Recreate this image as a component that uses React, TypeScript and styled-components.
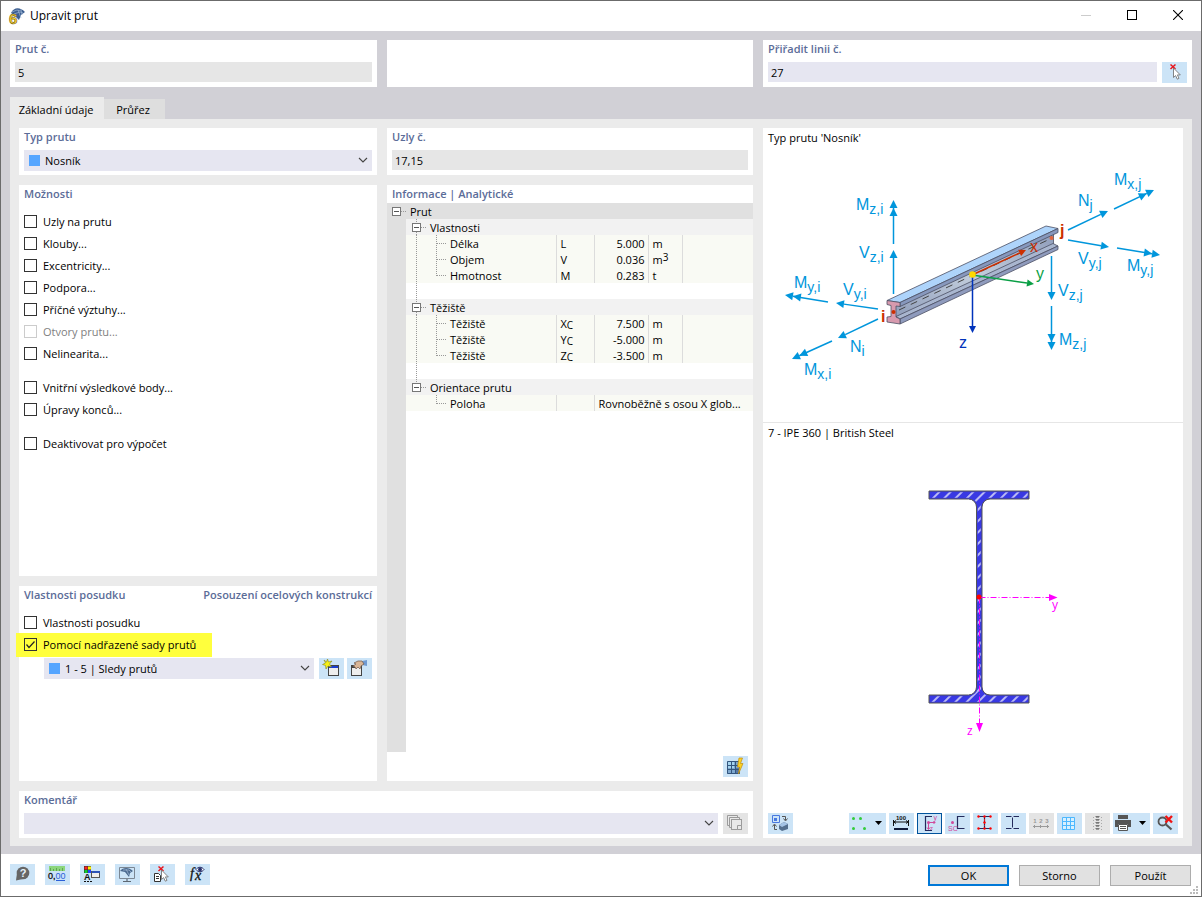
import React from "react";
import styled, { createGlobalStyle } from "styled-components";

const GlobalStyle = createGlobalStyle`
  *, *::before, *::after { box-sizing: border-box; }
  html, body { margin: 0; padding: 0; }
  body, button, input, select, table {
    font-family: "Open Sans", "Noto Sans", sans-serif;
    font-size: 11px;
    color: #000;
  }
`;

/* ---------- window frame ---------- */

const Window = styled.div`
  display: flex;
  flex-direction: column;
  min-height: 100vh;
  background: #fff;
  border: 1px solid #6b6b6b;
`;

const TitleBar = styled.header`
  display: flex;
  align-items: center;
  height: 30px;
  padding-left: 7px;
  gap: 4px;
`;

const WindowTitle = styled.h1`
  flex: 1;
  margin: 0;
  font-size: 12px;
  line-height: 16px;
  font-weight: 400;
`;

const WindowControls = styled.div`
  display: flex;
`;

const WindowButton = styled.button`
  display: flex;
  align-items: center;
  justify-content: center;
  width: 46px;
  height: 30px;
  padding: 0 0 2px;
  border: 0;
  background: transparent;
`;

const Body = styled.main`
  flex: 1;
  display: flex;
  flex-direction: column;
  padding: 9px 9px 8px;
  background: #d1d0d6;
`;

const TopRow = styled.div`
  display: grid;
  grid-template-columns: minmax(0, 367fr) minmax(0, 366fr) minmax(0, 429fr);
  gap: 10px;
`;

const Tabs = styled.div`
  display: flex;
  align-items: flex-end;
  height: 22px;
  margin-top: 10px;
`;

const Tab = styled.button<{ $active?: boolean }>`
  height: ${(p) => (p.$active ? 22 : 20)}px;
  width: ${(p) => (p.$active ? 94 : 61)}px;
  padding: ${(p) => (p.$active ? "4px 2px 0 0" : "2px 3px 0 0")};
  border: 0;
  background: ${(p) => (p.$active ? "#ebebeb" : "#dedede")};
  line-height: 16px;
  white-space: nowrap;
`;

const TabPage = styled.div`
  flex: 1;
  display: grid;
  grid-template-columns: minmax(0, 358fr) minmax(0, 366fr) minmax(0, 420fr);
  grid-template-rows: 47px minmax(391px, 1fr) 195px 47px;
  grid-template-areas:
    "type nodes view"
    "options info view"
    "design info view"
    "comment comment view";
  gap: 10px;
  padding: 9px 9px 8px;
  background: #ebebeb;
`;

const Footer = styled.footer`
  display: flex;
  align-items: flex-start;
  gap: 10px;
  height: 42px;
  padding: 10px 10px 0 9px;
  position: relative;
`;

const Spacer = styled.div`
  flex: 1;
`;

const DialogButton = styled.button<{ $primary?: boolean }>`
  width: 81px;
  height: 21px;
  padding: 0;
  margin-top: 1px;
  background: #e1e1e1;
  border: ${(p) => (p.$primary ? "2px solid #0078d7" : "1px solid #adadad")};
  line-height: 16px;
`;

const Grip = styled.svg`
  position: absolute;
  right: 3px;
  bottom: 2px;
`;

/* ---------- panels ---------- */

const Panel = styled.section<{ $area?: string }>`
  display: flex;
  flex-direction: column;
  min-height: 47px;
  padding: 0 5px 4px;
  background: #fff;
  ${(p) => p.$area && `grid-area: ${p.$area};`}
`;

const Heading = styled.h2`
  display: flex;
  justify-content: space-between;
  margin: 0;
  height: 22px;
  font-size: 11px;
  line-height: 18px;
  font-weight: 600;
  color: #5b6c98;
`;

const FieldRow = styled.div`
  display: flex;
  gap: 5px;
`;

const TextField = styled.input<{ $editable?: boolean }>`
  flex: 1;
  min-width: 0;
  height: 20px;
  padding: 0 3px;
  border: 0;
  background: ${(p) => (p.$editable ? "#e6e6f1" : "#e6e6e6")};
`;

const Combo = styled.div`
  position: relative;
  flex: 1;
  display: flex;
  align-items: center;
  height: 21px;
  padding-left: 5px;
  gap: 5px;
  background: #e6e6f1;
`;

const Swatch = styled.span`
  width: 11px;
  height: 11px;
  background: #55a5ff;
`;

const ComboSelect = styled.select`
  flex: 1;
  min-width: 0;
  height: 20px;
  padding: 0 20px 0 0;
  border: 0;
  background: transparent;
  appearance: none;
`;

const Chevron = styled.svg`
  position: absolute;
  right: 4px;
  top: 7px;
  pointer-events: none;
`;

const IconButton = styled.button<{ $wide?: boolean; $off?: boolean; $on?: boolean }>`
  display: block;
  flex: none;
  width: ${(p) => (p.$wide ? 37 : 25)}px;
  height: 21px;
  padding: 0;
  border: 0;
  background: ${(p) => (p.$off ? "#e4e4e4" : "#cce4f7")};
  ${(p) => p.$on && "box-shadow: inset 0 0 0 1px #00539c;"}
  svg { display: block; }
`;

const CheckList = styled.div`
  display: flex;
  flex-direction: column;
  gap: 12px;
  padding-top: 4px;
`;

const CheckGroup = styled.div`
  display: flex;
  flex-direction: column;
`;

const CheckLabel = styled.label<{ $off?: boolean }>`
  display: flex;
  align-items: center;
  gap: 6px;
  height: 22px;
  line-height: 16px;
  color: ${(p) => (p.$off ? "#808080" : "#000")};
`;

const Highlight = styled.div`
  align-self: flex-start;
  width: 196px;
  margin: -1px 0 -1px -8px;
  padding: 1px 0 1px 8px;
  background: #ffff3d;
`;

const CheckInput = styled.input`
  appearance: none;
  flex: none;
  width: 13px;
  height: 13px;
  margin: 0;
  border: 1px solid #333;
  &:disabled { border-color: #ccc; }
`;

const CheckMark = styled.span`
  display: flex;
  position: relative;
  margin-bottom: 1px;
  svg { position: absolute; left: 0; top: 0; pointer-events: none; }
`;

const AssignedSet = styled.div`
  display: flex;
  margin: 2px 0 0 20px;
  gap: 5px;
`;

const ButtonPair = styled.div`
  display: flex;
  gap: 3px;
`;

/* ---------- information table ---------- */

const InfoPanel = styled(Panel)`
  padding: 0 0 4px;
`;

const InfoHeading = styled(Heading)`
  height: 18px;
  padding-left: 5px;
`;

const InfoArea = styled.div`
  flex: 1;
  background: linear-gradient(to right, #e0e0e0 19px, transparent 19px);
`;

const InfoFooter = styled.div`
  display: flex;
  justify-content: flex-end;
  padding: 4px 5px 0;
`;

const Table = styled.table`
  width: 100%;
  border-collapse: collapse;
  table-layout: fixed;
`;

const Row = styled.tr<{ $kind: "root" | "section" | "data" | "blank" }>`
  height: 16px;
  background: ${(p) =>
    ({ root: "#e0e0e0", section: "#f2f2f2", data: "#f9faf4", blank: "#fff" })[p.$kind]};
`;

const Strip = styled.td`
  padding: 0;
  background: #e0e0e0;
`;

const NameCell = styled.th`
  padding: 0;
  text-align: left;
  font-weight: 400;
`;

const NameLine = styled.div<{ $inset?: number }>`
  display: flex;
  height: 16px;
  line-height: 18px;
  padding-left: ${(p) => p.$inset ?? 0}px;
  svg { display: block; flex: none; }
`;

const Cell = styled.td<{ $right?: boolean }>`
  padding: 2px ${(p) => (p.$right ? 3 : 0)}px 0 4px;
  height: 16px;
  line-height: 14px;
  border-left: 1px solid #dcdcdc;
  text-align: ${(p) => (p.$right ? "right" : "left")};
  white-space: nowrap;
  sub, sup { font-size: 10px; line-height: 0; }
  sub { vertical-align: -1px; }
  sup { vertical-align: 3px; }
`;

const PlainCell = styled.td`
  padding: 0;
`;

const Toggle = styled.button`
  width: 9px;
  height: 16px;
  padding: 0;
  border: 0;
  background: transparent;
`;

/* ---------- graphics ---------- */

const ViewPanel = styled(Panel)`
  padding: 0 0 4px;
`;

const ViewTitle = styled.p`
  margin: 0;
  padding: 2px 5px 0;
  height: 20px;
  line-height: 16px;
`;

const MemberView = styled.div`
  height: 295px;
  border-bottom: 1px solid #e6e6e6;
`;

const SectionView = styled.div`
  flex: 1;
  min-height: 390px;
`;

const Drawing = styled.svg<{ $height: number }>`
  display: block;
  width: 100%;
  height: ${(p) => p.$height}px;
`;

const MemberSvg = styled(Drawing)`
  font-family: "Liberation Sans", Arial, sans-serif;
`;

const Toolbar = styled.div`
  display: flex;
  gap: 3px;
  padding: 0 5px;
`;

const BLUE = "#0096dc";
const NAVY = "#232a5c";

type ArrowProps = {
  from: [number, number];
  to: [number, number];
  color?: string;
  double?: boolean;
  size?: number;
};

function Arrow({ from, to, color = BLUE, double, size = 8 }: ArrowProps) {
  const dx = to[0] - from[0];
  const dy = to[1] - from[1];
  const len = Math.hypot(dx, dy);
  const ux = dx / len;
  const uy = dy / len;
  const half = size / 2;
  const head = (back: number) => {
    const tx = to[0] - ux * back;
    const ty = to[1] - uy * back;
    const bx = tx - ux * size;
    const by = ty - uy * size;
    return `${tx},${ty} ${bx - uy * half},${by + ux * half} ${bx + uy * half},${by - ux * half}`;
  };
  return (
    <g fill={color} stroke="none">
      <line
        x1={from[0]}
        y1={from[1]}
        x2={to[0] - ux * size}
        y2={to[1] - uy * size}
        stroke={color}
        strokeWidth="1.5"
      />
      <polygon points={head(0)} />
      {double && <polygon points={head(8)} />}
    </g>
  );
}

function Force({ x, y, name, sub }: { x: number; y: number; name: string; sub: string }) {
  return (
    <text x={x} y={y} fontSize="16" fill={BLUE}>
      {name}
      <tspan dy="4" fontSize="14">
        {sub}
      </tspan>
    </text>
  );
}

function MemberDrawing() {
  return (
    <MemberSvg $height={272} viewBox="763 148 420 272" role="img" aria-label="Nosník">
      <defs>
        <linearGradient id="web" x1="0" x2="1" y1="1" y2="0">
          <stop offset="0" stopColor="#8f9dba" />
          <stop offset="0.5" stopColor="#c3cedd" />
          <stop offset="1" stopColor="#8e9cba" />
        </linearGradient>
      </defs>
      <g stroke="#4b4f63" strokeWidth="0.8" strokeLinejoin="round">
        <polygon points="895,306 1053.500,232 1053.500,245 895,318" fill="url(#web)" />
        <polygon points="896,316.500 1053,243.500 1058,246 900,319" fill="#a9b6cf" />
        <polygon points="900,319 1058,246 1058,249.500 900,324" fill="#8f9bbd" />
        <polygon points="887,300.500 1046,226 1058,228.500 900,302.500" fill="#aed4fb" />
        <polygon points="900,302.500 1058,228.500 1058,232.500 900,306.500" fill="#8798bd" />
        <polygon
          points="887,300.500 900,302.500 900,306.500 896,306 896,317 900,319 900,324 887,322 887,317 891,316.500 891,305.500 887,304.500"
          fill="#d79aae"
        />
      </g>
      <line x1="899" y1="310" x2="1050" y2="239" stroke="#444" strokeDasharray="7 6" />
      <circle cx="893.500" cy="312" r="2" fill="#cc2f00" />
      <circle cx="1051.500" cy="238" r="2" fill="#e0663f" />

      <Arrow from={[972, 275]} to={[1026, 250]} color="#cc2f00" size={7} />
      <Arrow from={[972, 275]} to={[1034, 284]} color="#0a9f45" size={7} />
      <Arrow from={[972.5, 275]} to={[972.5, 333]} color="#0033bb" size={7} />
      <circle cx="972.500" cy="274.500" r="3.300" fill="#ffd800" />
      <text x="1030" y="252" fontSize="16" fill="#cc2f00">x</text>
      <text x="1036" y="279" fontSize="16" fill="#0a9f45">y</text>
      <text x="959" y="348" fontSize="16" fill="#0033bb">z</text>
      <text x="881" y="322" fontSize="16" fontWeight="700" fill="#cc2f00">i</text>
      <text x="1060" y="236" fontSize="16" fontWeight="700" fill="#cc2f00">j</text>

      <Arrow from={[893.5, 244]} to={[893.5, 200]} double />
      <Arrow from={[893.5, 294]} to={[893.5, 250]} />
      <Arrow from={[828, 302]} to={[785, 295]} double />
      <Arrow from={[878, 309]} to={[836, 303]} />
      <Arrow from={[878, 319]} to={[838, 338]} />
      <Arrow from={[832, 341]} to={[792, 359]} double />
      <Arrow from={[1068, 230]} to={[1108, 211]} />
      <Arrow from={[1114, 209]} to={[1154, 190]} double />
      <Arrow from={[1068, 240]} to={[1109, 247]} />
      <Arrow from={[1117, 248]} to={[1160, 255]} double />
      <Arrow from={[1051.5, 256]} to={[1051.5, 300]} />
      <Arrow from={[1051.5, 306]} to={[1051.5, 350]} double />

      <Force x={856} y={210} name="M" sub="z,i" />
      <Force x={859} y={258} name="V" sub="z,i" />
      <Force x={794} y={288} name="M" sub="y,i" />
      <Force x={843} y={295} name="V" sub="y,i" />
      <Force x={850} y={352} name="N" sub="i" />
      <Force x={804} y={375} name="M" sub="x,i" />
      <Force x={1114} y={185} name="M" sub="x,j" />
      <Force x={1078} y={206} name="N" sub="j" />
      <Force x={1078} y={264} name="V" sub="y,j" />
      <Force x={1127} y={271} name="M" sub="y,j" />
      <Force x={1058} y={296} name="V" sub="z,j" />
      <Force x={1059} y={345} name="M" sub="z,j" />
    </MemberSvg>
  );
}

function SectionDrawing() {
  const outline =
    "M929 491H1029V499H990A8 8 0 0 0 982 507V687A8 8 0 0 0 990 695H1029V703H929V695H968.500A8 8 0 0 0 976.500 687V507A8 8 0 0 0 968.500 499H929Z";
  return (
    <Drawing $height={358} viewBox="763 443 420 358" role="img" aria-label="IPE 360">
      <defs>
        <pattern id="hatch" width="8" height="8" patternUnits="userSpaceOnUse" patternTransform="rotate(45)">
          <line x1="4" y1="0" x2="4" y2="8" stroke="#fff" strokeWidth="1.300" />
        </pattern>
        <clipPath id="profile">
          <path d={outline} />
        </clipPath>
      </defs>
      <path d={outline} fill="#3939e3" />
      <path d={outline} fill="url(#hatch)" stroke="#3939e3" strokeWidth="2.500" clipPath="url(#profile)" />
      <path d={outline} fill="none" stroke="#555" />
      <path
        d="M979.500 597.500H1050M979.500 597.500V724"
        stroke="#f0f"
        fill="none"
        strokeDasharray="6 2 1 2"
      />
      <g fill="#f0f">
        <path d="M1049 594V601L1057.500 597.500ZM976 723H983L979.500 732Z" />
        <text x="1052" y="609" fontSize="12">y</text>
        <text x="967" y="735" fontSize="12">z</text>
      </g>
      <circle cx="979" cy="597" r="2.500" fill="#f00" />
    </Drawing>
  );
}

/* ---------- icons ---------- */

const IconSvg = styled.svg`
  font-family: "Liberation Sans", Arial, sans-serif;
`;

const SerifText = styled.text`
  font-family: "Liberation Serif", serif;
  font-style: italic;
`;

function Icon({ width = 25, children }: { width?: number; children: React.ReactNode }) {
  return (
    <IconSvg width={width} height="21" viewBox={`0 0 ${width} 21`} fill="none" aria-hidden="true">
      {children}
    </IconSvg>
  );
}

const cursorPath = "M11.500 6V15.500L13.600 13.600L15.300 17.200L17 16.400L15.400 12.900H18.300Z";

const AppIcon = () => (
  <IconSvg width="18" height="18" viewBox="0 0 18 18" aria-hidden="true">
    <path d="M3 6C6 0 12 0 17 5L13 8L11 13L6 8Z" fill="#3d5f91" />
    <path d="M4 5L9 3L13 4M6 7L12 5L15 6M10 3L13 11M13 2L14 8" stroke="#9db6d6" strokeWidth="0.7" fill="none" />
    <text x="1" y="16.500" fontSize="15" fontWeight="700" fill="#ffd42a" stroke="#6b5b1a" strokeWidth="0.6">
      6
    </text>
  </IconSvg>
);

const PickIcon = () => (
  <Icon>
    <path d="M8.500 2.500L13.500 7M13.500 2.500L8.500 7" stroke="#e8141c" strokeWidth="1.500" />
    <path d={cursorPath} fill="#fff" stroke="#777" strokeWidth="0.900" />
  </Icon>
);

const NewSetIcon = () => (
  <Icon>
    <rect x="9.500" y="7.500" width="10" height="10" fill="#eee" stroke="#444" />
    <rect x="10" y="8" width="9" height="2" fill="#1b3fd0" />
    <path d="M8.500 1L9.500 4L13 3L10.500 6L12.500 9L9 8L7 11L6.500 7.500L3.500 6.500L6.500 5L5 2L7.500 4Z" fill="#f7f016" stroke="#84851f" strokeWidth="0.6" />
  </Icon>
);

const EditSetIcon = () => (
  <Icon>
    <rect x="4.500" y="7.500" width="10" height="10" fill="#eee" stroke="#444" />
    <rect x="4" y="7" width="5" height="3" fill="#444" />
    <path d="M15 3L20 2V8L15 7Z" fill="#6f9ad2" />
    <path d="M7 5L11 3H15L17 6L14 8L13 11L11 9L9 11L8 9L6 8L9 6Z" fill="#d9b596" stroke="#6f5849" strokeWidth="0.7" />
  </Icon>
);

const GridBoltIcon = () => (
  <Icon>
    <rect x="4" y="5" width="13" height="13" fill="#7ea8cf" />
    <rect x="4" y="5" width="7" height="7" fill="#a5d4ee" />
    <rect x="12" y="12" width="5" height="6" fill="#5577a6" />
    <path d="M4.500 5.500H16.500V17.500H4.500ZM8.500 5V18M12.500 5V18M4 9.500H17M4 13.500H17" stroke="#34567f" />
    <path d="M16 2H19.500L17.500 7.500H20L15.500 18L16.500 11H14.500Z" fill="#fcd226" stroke="#c08d10" strokeWidth="0.7" />
  </Icon>
);

const CopiesIcon = () => (
  <Icon>
    <g stroke="#9b9b9b" fill="#e9e9e9">
      <path d="M4.500 12.500V2.500H14.500V4M4.500 12.500H6M6.500 14.500V4.500H16.500V6M6.500 14.500H8" />
      <rect x="8.500" y="6.500" width="10" height="10" />
      <path d="M14.500 16.500V12.500H18.500" />
    </g>
  </Icon>
);

const RenderIcon = () => (
  <Icon>
    <path d="M4.500 2.500H11.500V9.500H4.500Z" stroke="#4878e0" />
    <rect x="6" y="5" width="3" height="3" fill="#4878e0" />
    <path d="M14 3.500H17.500V7M15.500 5.500L17.500 8L19.500 5.500" stroke="#555" />
    <path d="M6.500 12V16.500H9M4.500 13.500L6.500 11L8.500 13.500" stroke="#555" />
    <path d="M11 12L16 9L20 11V16L14 18L11 16Z" fill="#54708f" />
    <path d="M11 12L16 9L20 11L14 14Z" fill="#a4c4e6" />
  </Icon>
);

const DropArrow = () => <path d="M26 8H33L29.500 12Z" fill="#000" />;

const PointsIcon = () => (
  <Icon width={37}>
    <g fill="#33cc3b">
      <circle cx="4.500" cy="5.500" r="1.500" />
      <circle cx="11.500" cy="5.500" r="1.500" />
      <circle cx="4.500" cy="15.500" r="1.500" />
      <circle cx="15.500" cy="15.500" r="1.500" />
    </g>
    <DropArrow />
  </Icon>
);

const DimensionIcon = () => (
  <Icon>
    <text x="12" y="6.500" fontSize="6" fontWeight="700" textAnchor="middle" fill="#111">100</text>
    <path d="M4.500 7V13M19.500 7V13M5 9H19M7 7.500L5 9L7 10.500M17 7.500L19 9L17 10.500" stroke="#111" />
    <rect x="5" y="15" width="14" height="2" fill="#111b3a" />
  </Icon>
);

const AxesIcon = () => (
  <Icon>
    <path d="M15 3.500H8.500V17.500H15" stroke={NAVY} strokeWidth="1.200" />
    <path d="M11.500 9.500H18M11.500 9.500V16M10 14.500L11.500 16.500L13 14.500M16.500 8L18 9.500L16.500 11" stroke="#d04a9b" />
    <circle cx="11.500" cy="9.500" r="1.500" fill="#d04a9b" />
    <text x="16.500" y="7" fontSize="7" fill="#d04a9b">y</text>
    <text x="13" y="17" fontSize="6" fill="#d04a9b">z</text>
  </Icon>
);

const ShearIcon = () => (
  <Icon>
    <path d="M19.500 3.500H12.500V15.500H19.500" stroke={NAVY} strokeWidth="1.200" />
    <circle cx="7.500" cy="9.500" r="1.500" fill="#d04a9b" />
    <text x="3" y="18" fontSize="7" fill="#d04a9b">SC</text>
  </Icon>
);

const StressIcon = () => (
  <Icon>
    <path d="M5 3.500H18M5 15.500H18M11.500 4V15" stroke={NAVY} strokeWidth="1.200" />
    <path d="M11.500 6V13" stroke="#e11" strokeDasharray="2 1" />
    <g fill="#f00">
      {[5.5, 11.5, 17.5].map((x) => (
        <React.Fragment key={x}>
          <circle cx={x} cy="3.500" r="1.200" />
          <circle cx={x} cy="15.500" r="1.200" />
        </React.Fragment>
      ))}
      <circle cx="11.500" cy="9.500" r="1.200" />
    </g>
  </Icon>
);

const PartsIcon = () => (
  <Icon>
    <path d="M5 3.500H10.500M12.500 3.500H18M5 15.500H10.500M12.500 15.500H18M11.500 4.500V14.500" stroke={NAVY} />
  </Icon>
);

const NumbersIcon = () => (
  <Icon>
    <g fontSize="6" fontWeight="700" textAnchor="middle" fill="#999">
      <text x="6" y="10">1</text>
      <text x="12" y="10">2</text>
      <text x="18" y="10">3</text>
    </g>
    <path d="M4 13.500H20M5.500 12V15M11.500 12V15M18.500 12V15" stroke="#999" />
  </Icon>
);

const GridIcon = () => (
  <Icon>
    <path d="M5.500 4.500H17.500V16.500H5.500ZM9.500 4V17M13.500 4V17M5 8.500H18M5 12.500H18" fill="#d8f0ff" stroke="#4db8ff" />
  </Icon>
);

const LegendIcon = () => (
  <Icon>
    <path d="M12.500 3V18" stroke="#777" strokeWidth="4" strokeDasharray="1 2" />
    <path d="M12.500 4V17" stroke="#999" strokeWidth="3" strokeDasharray="1 2" />
    <path d="M8.500 4V17M16.500 4V17" stroke="#aaa" strokeDasharray="1 2" />
  </Icon>
);

const PrinterIcon = () => (
  <Icon width={37}>
    <rect x="5" y="2" width="10" height="4" fill="#555" />
    <path d="M2 7H18V14H15V11H5V14H2Z" fill="#555" />
    <path d="M5.500 11.500H14.500V17.500H5.500ZM7 13.500H13M7 15.500H13" fill="#fff" stroke="#555" />
    <DropArrow />
  </Icon>
);

const ZoomOffIcon = () => (
  <Icon>
    <circle cx="9.500" cy="8.500" r="4" stroke="#555" strokeWidth="1.800" />
    <path d="M13 11.500L18.500 16.500" stroke="#555" strokeWidth="2.200" />
    <path d="M12.500 3L19 9.500M19 3L12.500 9.500" stroke="#f01414" strokeWidth="2.400" />
  </Icon>
);

const HelpIcon = () => (
  <Icon>
    <circle cx="13" cy="9" r="6.300" fill="#666" />
    <path d="M7 9L6 16.500L13 15Z" fill="#666" />
    <text x="13" y="13" fontSize="11" fontWeight="700" textAnchor="middle" fill="#e6f2fb">?</text>
  </Icon>
);

const UnitsIcon = () => (
  <Icon>
    <rect x="4" y="2" width="16" height="5" fill="#8cd67c" />
    <path d="M5.500 4V7M8.500 5V7M11.500 4V7M14.500 5V7M17.500 4V7" stroke="#5fa553" />
    <text x="3" y="15" fontSize="9" fill="#111" stroke="#111" strokeWidth="0.300">0,</text>
    <text x="10.500" y="15" fontSize="9" fill="#2a60d8">00</text>
    <path d="M11 16.500H20" stroke="#2a60d8" />
  </Icon>
);

const DisplayIcon = () => (
  <Icon>
    <rect x="4" y="2" width="7" height="7" fill="#333" />
    <rect x="4.500" y="2.500" width="3" height="3" fill="#f22" />
    <rect x="8" y="2.500" width="3" height="3" fill="#fe0" />
    <rect x="4.500" y="6" width="3" height="3" fill="#1c3" />
    <rect x="8" y="6" width="3" height="3" fill="#24f" />
    <text x="4" y="16" fontSize="9" fontWeight="700" fill="#111">A</text>
    <path d="M4 17.500H12" stroke="#111" strokeDasharray="2 1" />
    <rect x="11.500" y="7.500" width="8" height="6" fill="#eee" stroke="#555" />
    <rect x="12" y="7" width="8" height="2" fill="#2c54b8" />
  </Icon>
);

const MonitorIcon = () => (
  <Icon>
    <path d="M4.500 3.500H19.500V14.500H4.500Z" stroke="#7b8794" />
    <path d="M5 7C8 3 14 3 18 7L15 9L14 13L10 8Z" fill="#49698f" />
    <path d="M8 6L14 6L16 8M11 5L14 11" stroke="#b5cae2" strokeWidth="0.6" />
    <path d="M12 15V17M8 17.500H16" stroke="#5d6873" strokeWidth="1.200" />
  </Icon>
);

const PickListIcon = () => (
  <Icon>
    <path d="M8.500 2.500L13.500 7M13.500 2.500L8.500 7" stroke="#e8141c" strokeWidth="1.500" />
    <path d="M4.500 9.500H8.500L10.500 11.500V17.500H4.500ZM6 12.500H9M6 14.500H9" fill="#fff" stroke="#333" />
    <path d={cursorPath} fill="#fff" stroke="#777" strokeWidth="0.900" />
  </Icon>
);

const FormulaIcon = () => (
  <Icon>
    <SerifText x="5" y="14" fontSize="14" fill="#111" stroke="#111" strokeWidth="0.300">f</SerifText>
    <SerifText x="10" y="16" fontSize="14" fill="#111" stroke="#111" strokeWidth="0.300">x</SerifText>
    <path d="M11 5.500C13 2.500 17 2.500 19 5.500C17 8.500 13 8.500 11 5.500Z" fill="#fff" stroke="#27306b" />
    <circle cx="15" cy="5.500" r="2" fill="#27306b" />
  </Icon>
);

/* ---------- reusable controls ---------- */

function ComboBox({ label, value, swatch }: { label: string; value: string; swatch?: boolean }) {
  return (
    <Combo>
      {swatch && <Swatch />}
      <ComboSelect aria-label={label} defaultValue={value}>
        <option value={value}>{value}</option>
      </ComboSelect>
      <Chevron width="10" height="7" viewBox="0 0 10 7" fill="none">
        <path d="M1 1L5 5L9 1" stroke="#444" strokeWidth="1.100" />
      </Chevron>
    </Combo>
  );
}

function Check({ text, checked, off }: { text: string; checked?: boolean; off?: boolean }) {
  return (
    <CheckLabel $off={off}>
      <CheckMark>
        <CheckInput type="checkbox" defaultChecked={checked} disabled={off} />
        {checked && (
          <svg width="13" height="13" viewBox="0 0 13 13" fill="none">
            <path d="M2.500 6.500L5 9.500L10.500 3.500" stroke="#222" strokeWidth="1.200" />
          </svg>
        )}
      </CheckMark>
      {text}
    </CheckLabel>
  );
}

const DOTS = { stroke: "#999", strokeDasharray: "1 1" };

function ToggleBox({ name, above, below }: { name: string; above?: boolean; below?: boolean }) {
  return (
    <Toggle type="button" aria-label={`Sbalit ${name}`}>
      <svg width="9" height="16" viewBox="0 0 9 16" fill="none">
        {above && <path d="M4.500 0V4" {...DOTS} />}
        {below && <path d="M4.500 13V16" {...DOTS} />}
        <rect x="0.500" y="4.500" width="8" height="8" fill="#fff" stroke="#777" />
        <path d="M2 8.500H7" stroke="#555" />
      </svg>
    </Toggle>
  );
}

function Stub() {
  return (
    <svg width="9" height="16" viewBox="0 0 9 16">
      <path d="M0 8.500H6" {...DOTS} />
    </svg>
  );
}

function SectionRow({ name, above = true, below = true }: { name: string; above?: boolean; below?: boolean }) {
  return (
    <Row $kind="section">
      <Strip />
      <NameCell scope="rowgroup" colSpan={5}>
        <NameLine $inset={6}>
          <ToggleBox name={name} above={above} below={below} />
          <Stub />
          {name}
        </NameLine>
      </NameCell>
    </Row>
  );
}

function Branch({ name, trunk = true, last }: { name: string; trunk?: boolean; last?: boolean }) {
  return (
    <NameLine>
      <svg width="44" height="16" viewBox="0 0 44 16">
        {trunk && <path d="M10.500 0V16" {...DOTS} />}
        <path d={last ? "M30.500 0V9" : "M30.500 0V16"} {...DOTS} />
        <path d="M31 8.500H41" {...DOTS} />
      </svg>
      {name}
    </NameLine>
  );
}

type DataProps = { name: string; symbol: React.ReactNode; value: string; unit: React.ReactNode; last?: boolean };

function DataRow({ name, symbol, value, unit, last }: DataProps) {
  return (
    <Row $kind="data">
      <Strip />
      <NameCell scope="row">
        <Branch name={name} last={last} />
      </NameCell>
      <Cell>{symbol}</Cell>
      <Cell $right>{value}</Cell>
      <Cell>{unit}</Cell>
      <Cell />
    </Row>
  );
}

function BlankRow() {
  return (
    <Row $kind="blank">
      <Strip />
      <PlainCell colSpan={5}>
        <NameLine>
          <svg width="44" height="16" viewBox="0 0 44 16">
            <path d="M10.500 0V16" {...DOTS} />
          </svg>
        </NameLine>
      </PlainCell>
    </Row>
  );
}

const Col = styled.col<{ $w?: number }>`
  width: ${(p) => (p.$w ? `${p.$w}px` : "auto")};
`;

function InfoTable() {
  return (
    <Table>
      <colgroup>
        <Col $w={19} />
        <Col $w={150} />
        <Col $w={38} />
        <Col $w={54} />
        <Col $w={34} />
        <Col />
      </colgroup>
      <tbody>
        <Row $kind="root">
          <NameCell colSpan={6} scope="rowgroup">
            <NameLine $inset={5}>
              <ToggleBox name="Prut" />
              <Stub />
              Prut
            </NameLine>
          </NameCell>
        </Row>
        <SectionRow name="Vlastnosti" />
        <DataRow name="Délka" symbol="L" value="5.000" unit="m" />
        <DataRow name="Objem" symbol="V" value="0.036" unit={<>m<sup>3</sup></>} />
        <DataRow name="Hmotnost" symbol="M" value="0.283" unit="t" last />
        <BlankRow />
        <SectionRow name="Těžiště" />
        <DataRow name="Těžiště" symbol={<>X<sub>C</sub></>} value="7.500" unit="m" />
        <DataRow name="Těžiště" symbol={<>Y<sub>C</sub></>} value="-5.000" unit="m" />
        <DataRow name="Těžiště" symbol={<>Z<sub>C</sub></>} value="-3.500" unit="m" last />
        <BlankRow />
        <SectionRow name="Orientace prutu" below={false} />
        <Row $kind="data">
          <Strip />
          <NameCell scope="row">
            <Branch name="Poloha" trunk={false} last />
          </NameCell>
          <Cell />
          <Cell colSpan={3}>Rovnoběžně s osou X glob...</Cell>
        </Row>
      </tbody>
    </Table>
  );
}

const footerTools: [string, () => React.JSX.Element][] = [
  ["Nápověda", HelpIcon],
  ["Jednotky", UnitsIcon],
  ["Zobrazení", DisplayIcon],
  ["Pohled", MonitorIcon],
  ["Výběr", PickListIcon],
  ["Vzorec", FormulaIcon],
];

const sectionTools: { name: string; icon: () => React.JSX.Element; wide?: boolean; off?: boolean; on?: boolean }[] = [
  { name: "Body", icon: PointsIcon, wide: true },
  { name: "Kóty", icon: DimensionIcon },
  { name: "Hlavní osy", icon: AxesIcon, on: true },
  { name: "Střed smyku", icon: ShearIcon },
  { name: "Napěťové body", icon: StressIcon },
  { name: "Části průřezu", icon: PartsIcon },
  { name: "Číslování", icon: NumbersIcon, off: true },
  { name: "Rastr", icon: GridIcon },
  { name: "Legenda", icon: LegendIcon, off: true },
  { name: "Tisk", icon: PrinterIcon, wide: true },
  { name: "Zrušit přiblížení", icon: ZoomOffIcon },
];

export default function App() {
  return (
    <>
      <GlobalStyle />
      <Window>
        <TitleBar>
          <AppIcon />
          <WindowTitle>Upravit prut</WindowTitle>
          <WindowControls>
            <WindowButton type="button" aria-label="Minimalizovat">
              <svg width="10" height="10"><path d="M0 5.500H10" stroke="#ccc" /></svg>
            </WindowButton>
            <WindowButton type="button" aria-label="Maximalizovat">
              <svg width="10" height="10"><rect x="0.500" y="0.500" width="9" height="9" fill="none" stroke="#000" /></svg>
            </WindowButton>
            <WindowButton type="button" aria-label="Zavřít">
              <svg width="10" height="10"><path d="M0 0L10 10M10 0L0 10" stroke="#000" strokeWidth="1.100" /></svg>
            </WindowButton>
          </WindowControls>
        </TitleBar>

        <Body>
          <TopRow>
            <Panel>
              <Heading as="label" htmlFor="member-no">Prut č.</Heading>
              <FieldRow>
                <TextField id="member-no" defaultValue="5" readOnly />
              </FieldRow>
            </Panel>
            <Panel />
            <Panel>
              <Heading as="label" htmlFor="line-no">Přiřadit linii č.</Heading>
              <FieldRow>
                <TextField id="line-no" defaultValue="27" $editable />
                <IconButton type="button" aria-label="Vybrat linii"><PickIcon /></IconButton>
              </FieldRow>
            </Panel>
          </TopRow>

          <Tabs role="tablist">
            <Tab type="button" role="tab" aria-selected="true" $active>Základní údaje</Tab>
            <Tab type="button" role="tab" aria-selected="false">Průřez</Tab>
          </Tabs>

          <TabPage>
            <Panel $area="type">
              <Heading>Typ prutu</Heading>
              <ComboBox label="Typ prutu" value="Nosník" swatch />
            </Panel>

            <Panel $area="nodes">
              <Heading as="label" htmlFor="nodes">Uzly č.</Heading>
              <FieldRow>
                <TextField id="nodes" defaultValue="17,15" readOnly />
              </FieldRow>
            </Panel>

            <Panel $area="options">
              <Heading>Možnosti</Heading>
              <CheckList>
                <CheckGroup>
                  <Check text="Uzly na prutu" />
                  <Check text="Klouby..." />
                  <Check text="Excentricity..." />
                  <Check text="Podpora..." />
                  <Check text="Příčné výztuhy..." />
                  <Check text="Otvory prutu..." off />
                  <Check text="Nelinearita..." />
                </CheckGroup>
                <CheckGroup>
                  <Check text="Vnitřní výsledkové body..." />
                  <Check text="Úpravy konců..." />
                </CheckGroup>
                <CheckGroup>
                  <Check text="Deaktivovat pro výpočet" />
                </CheckGroup>
              </CheckList>
            </Panel>

            <Panel $area="design">
              <Heading>
                <span>Vlastnosti posudku</span>
                <span>Posouzení ocelových konstrukcí</span>
              </Heading>
              <CheckList>
                <CheckGroup>
                  <Check text="Vlastnosti posudku" />
                  <Highlight>
                    <Check text="Pomocí nadřazené sady prutů" checked />
                  </Highlight>
                </CheckGroup>
              </CheckList>
              <AssignedSet>
                <ComboBox label="Sada prutů" value="1 - 5 | Sledy prutů" swatch />
                <ButtonPair>
                  <IconButton type="button" aria-label="Nová sada prutů"><NewSetIcon /></IconButton>
                  <IconButton type="button" aria-label="Upravit sadu prutů"><EditSetIcon /></IconButton>
                </ButtonPair>
              </AssignedSet>
            </Panel>

            <InfoPanel $area="info">
              <InfoHeading>Informace | Analytické</InfoHeading>
              <InfoArea>
                <InfoTable />
              </InfoArea>
              <InfoFooter>
                <IconButton type="button" aria-label="Přepočítat"><GridBoltIcon /></IconButton>
              </InfoFooter>
            </InfoPanel>

            <Panel $area="comment">
              <Heading>Komentář</Heading>
              <FieldRow>
                <ComboBox label="Komentář" value="" />
                <IconButton type="button" aria-label="Převzít komentář" $off><CopiesIcon /></IconButton>
              </FieldRow>
            </Panel>

            <ViewPanel $area="view">
              <MemberView>
                <ViewTitle>Typ prutu 'Nosník'</ViewTitle>
                <MemberDrawing />
              </MemberView>
              <SectionView>
                <ViewTitle>7 - IPE 360 | British Steel</ViewTitle>
                <SectionDrawing />
              </SectionView>
              <Toolbar>
                <IconButton type="button" aria-label="Přepnout zobrazení"><RenderIcon /></IconButton>
                <Spacer />
                {sectionTools.map(({ name, icon: ToolIcon, wide, off, on }) => (
                  <IconButton key={name} type="button" aria-label={name} $wide={wide} $off={off} $on={on}>
                    <ToolIcon />
                  </IconButton>
                ))}
              </Toolbar>
            </ViewPanel>
          </TabPage>
        </Body>

        <Footer>
          {footerTools.map(([name, ToolIcon]) => (
            <IconButton key={name} type="button" aria-label={name}>
              <ToolIcon />
            </IconButton>
          ))}
          <Spacer />
          <DialogButton type="submit" $primary>OK</DialogButton>
          <DialogButton type="button">Storno</DialogButton>
          <DialogButton type="button">Použít</DialogButton>
          <Grip width="8" height="8" viewBox="0 0 8 8" fill="#bbb">
            <path d="M6 0h2v2h-2zM6 3h2v2h-2zM3 3h2v2h-2zM6 6h2v2h-2zM3 6h2v2h-2zM0 6h2v2h-2z" />
          </Grip>
        </Footer>
      </Window>
    </>
  );
}
